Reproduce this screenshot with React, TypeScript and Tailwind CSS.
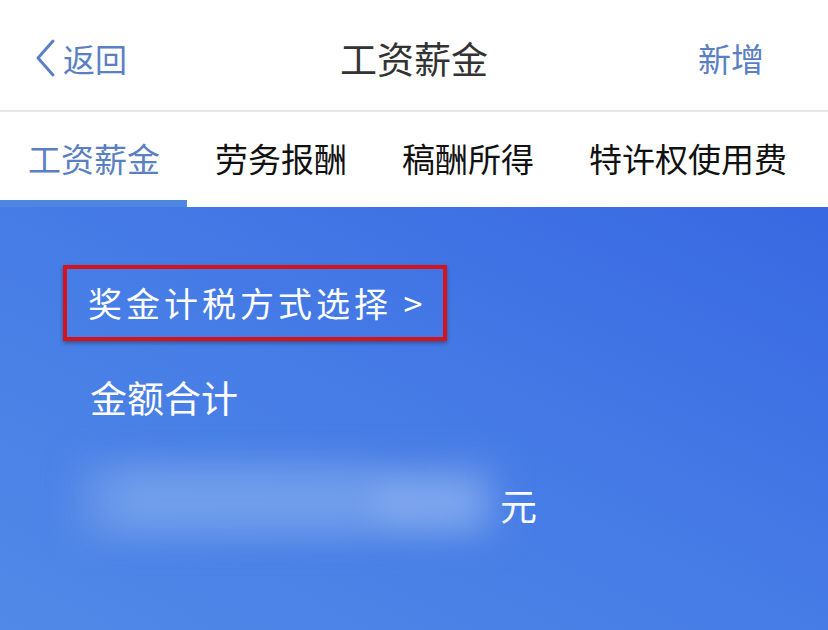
import React from "react";

const font = { fontFamily: '"Noto Sans CJK SC", "Noto Sans", sans-serif' };

const tabs = ["工资薪金", "劳务报酬", "稿酬所得", "特许权使用费"];

export default function App() {
  return (
    <div style={font} className="w-[828px] h-[630px] overflow-hidden bg-white flex flex-col">
      {/* nav bar */}
      <div className="h-[110px] shrink-0 grid grid-cols-[1fr_auto_1fr] items-center pt-[6px]">
        <div className="flex items-center pl-[33px] text-[#5b7fc3]">
          <svg width="24" height="40" viewBox="0 0 24 40" fill="none" className="mr-[6px]">
            <path d="M20 3 L5 20 L20 37" stroke="#5b7fc3" strokeWidth="3" strokeLinecap="round" strokeLinejoin="round" />
          </svg>
          <span className="text-[32px] leading-none">返回</span>
        </div>
        <div className="text-[37px] leading-none text-[#333333]">工资薪金</div>
        <div className="flex justify-end pr-[64px] text-[33px] leading-none text-[#5b7fc3]">新增</div>
      </div>
      <div className="h-[2px] shrink-0 bg-[#e8e8e8]" />

      {/* tabs */}
      <div className="h-[88px] shrink-0 flex items-center pl-[28px] pt-[4px] gap-[55px] text-[33px] leading-none text-[#111111]">
        {tabs.map((t, i) => (
          <span key={t} className={i === 0 ? "text-[#5b7fc3]" : ""}>
            {t}
          </span>
        ))}
      </div>
      <div className="h-[7px] shrink-0 flex">
        <div className="w-[187px] bg-[#4f86e2]" />
        <div className="flex-1 bg-white" />
      </div>

      {/* blue summary */}
      <div className="flex-1 bg-linear-to-tr from-[#5089e7] via-[#467ce6] to-[#3868e2] pt-[58px] text-white">
        <div className="ml-[63px] inline-flex items-center h-[76px] pl-[21px] pr-[16px] border-[4px] border-[#d3141d] shadow-[0_2px_4px_rgba(0,0,0,0.35)]">
          <span className="text-[34px] leading-none tracking-[4px]">奖金计税方式选择 &gt;</span>
        </div>
        <div className="ml-[90px] mt-[38px] text-[37px] leading-none">金额合计</div>
        <div className="ml-[75px] mt-[34px] flex items-center">
          <div className="relative w-[425px] h-[100px]">
            <div className="absolute left-0 top-[10px] w-[425px] h-[80px] bg-[#7ea5ee]/35 blur-[16px]" />
            <div className="absolute left-[30px] top-[22px] w-[290px] h-[56px] rounded-[30px] bg-[#8fb3f0]/45 blur-[18px]" />
            <div className="absolute left-[300px] top-[28px] w-[110px] h-[50px] rounded-[30px] bg-[#a3c1f4]/50 blur-[16px]" />
          </div>
          <span className="text-[37px] leading-none mt-[10px]">元</span>
        </div>
      </div>
    </div>
  );
}
